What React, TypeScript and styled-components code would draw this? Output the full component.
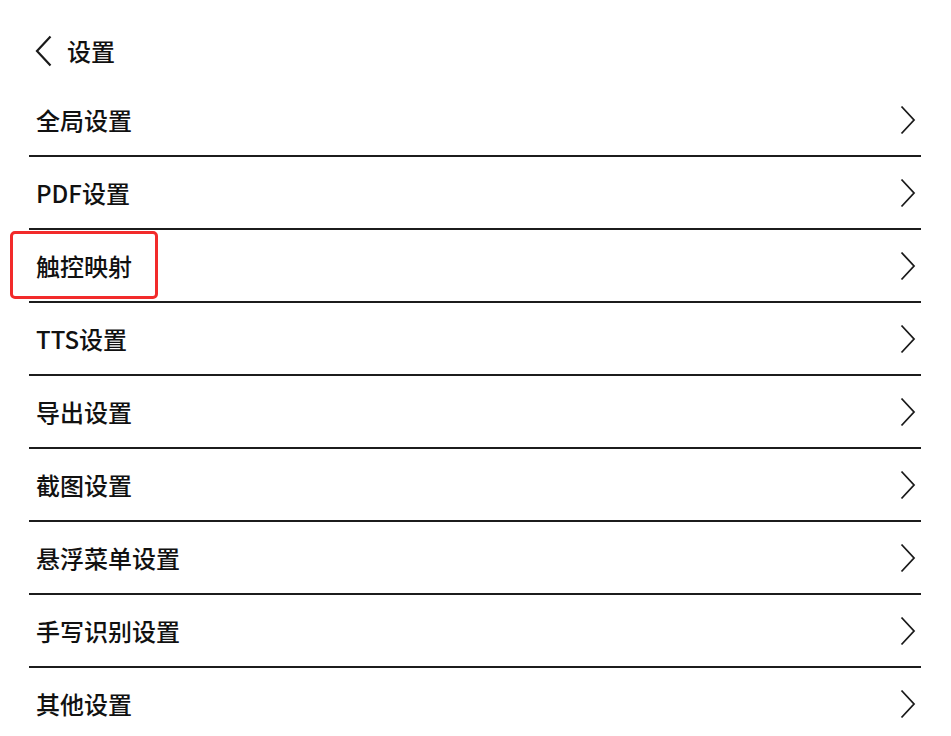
import React from 'react';
import styled, { createGlobalStyle } from 'styled-components';

const GlobalStyle = createGlobalStyle`
  html, body {
    margin: 0;
    padding: 0;
    background: #ffffff;
  }
  body {
    font-family: "Noto Sans CJK SC", "Noto Sans", sans-serif;
    color: #111111;
  }
`;

const items = [
  '全局设置',
  'PDF设置',
  '触控映射',
  'TTS设置',
  '导出设置',
  '截图设置',
  '悬浮菜单设置',
  '手写识别设置',
  '其他设置',
];

const App: React.FC = () => {
  return (
    <>
      <GlobalStyle />
      <Page>
        <Header>
          <BackIcon width='18' height='32' viewBox='0 0 18 32'>
            <polyline
              points='15.5,1.5 2,16 15.5,30.5'
              fill='none'
              stroke='#1a1a1a'
              strokeWidth='2.2'
              strokeLinejoin='miter'
            />
          </BackIcon>
          <Title>设置</Title>
        </Header>
        <List>
          {items.map((label, i) => (
            <Row key={label} $last={i === items.length - 1}>
              {label === '触控映射' && <Highlight />}
              <Label>{label}</Label>
              <Chevron width='16' height='30' viewBox='0 0 16 30'>
                <polyline
                  points='1.5,1.5 14,15 1.5,28.5'
                  fill='none'
                  stroke='#1a1a1a'
                  strokeWidth='1.8'
                />
              </Chevron>
            </Row>
          ))}
        </List>
      </Page>
    </>
  );
};

const Page = styled.div`
  width: 951px;
  height: 736px;
  overflow: hidden;
  background: #ffffff;
`;

const Header = styled.div`
  display: flex;
  align-items: center;
  height: 84px;
  padding: 18px 0 0 35px;
  box-sizing: border-box;
`;

const BackIcon = styled.svg`
  display: block;
  margin-right: 14px;
`;

const Title = styled.span`
  font-size: 24px;
  font-weight: 500;
  line-height: 1;
`;

const List = styled.div`
  margin: 0 30px 0 29px;
`;

const Row = styled.div<{ $last?: boolean }>`
  position: relative;
  display: flex;
  align-items: center;
  justify-content: space-between;
  height: 73px;
  box-sizing: border-box;
  padding: 0 5px 0 7px;
  border-bottom: 2px solid ${({ $last }) => ($last ? '#e6e6e6' : '#1c1c1c')};
`;

const Label = styled.span`
  font-size: 24px;
  font-weight: 500;
  line-height: 1;
  color: #111111;
`;

const Chevron = styled.svg`
  display: block;
`;

const Highlight = styled.div`
  position: absolute;
  left: -19px;
  top: 1px;
  width: 148px;
  height: 68px;
  box-sizing: border-box;
  border: 3px solid #f22a2a;
  border-radius: 5px;
  pointer-events: none;
`;

export default App;
